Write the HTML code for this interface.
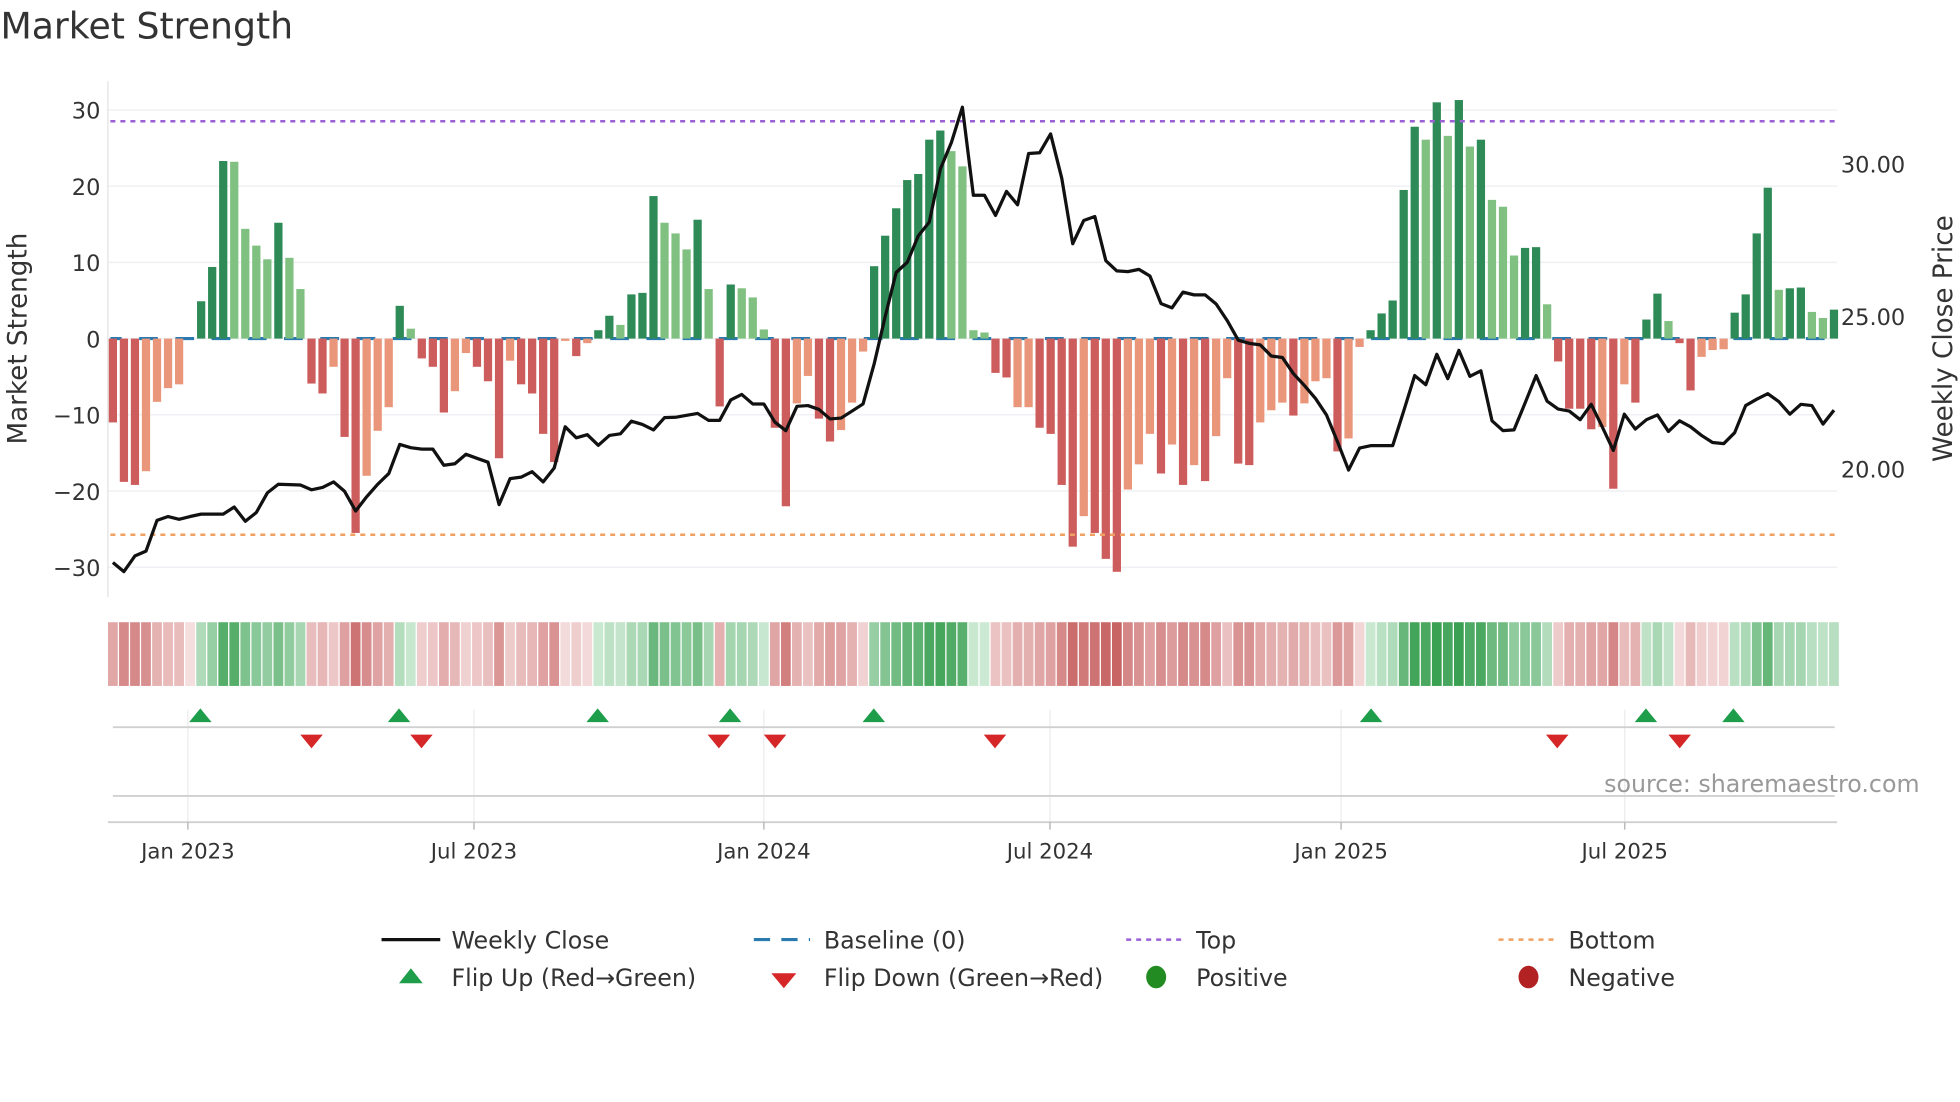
<!DOCTYPE html>
<html><head><meta charset="utf-8"><style>
html,body{margin:0;padding:0;background:#fff;}
svg{display:block;font-family:"DejaVu Sans","Liberation Sans",sans-serif;}
</style></head><body>
<svg id="c" width="1960" height="1102" viewBox="0 0 1568 882" xmlns="http://www.w3.org/2000/svg">
<rect width="1568" height="882" fill="#fff"/>
<text x="0" y="31" font-size="29" fill="#333">Market Strength</text>
<g id="grid"></g>
<line x1="86" y1="65" x2="86" y2="478" stroke="#e3e3e3" stroke-width="1"/>
<g font-size="18" fill="#333" text-anchor="end">
<text x="80" y="95">30</text><text x="80" y="156">20</text><text x="80" y="217">10</text><text x="80" y="278">0</text>
<text x="80" y="339">−10</text><text x="80" y="400">−20</text><text x="80" y="461">−30</text>
</g>
<g font-size="18" fill="#333">
<text x="1473" y="138">30.00</text><text x="1473" y="260">25.00</text><text x="1473" y="382">20.00</text>
</g>
<text transform="translate(21,271) rotate(-90)" font-size="21" fill="#333" text-anchor="middle">Market Strength</text>
<text transform="translate(1562,271) rotate(-90)" font-size="21" fill="#333" text-anchor="middle">Weekly Close Price</text>
<line x1="88" y1="271" x2="1470" y2="271" stroke="#2a7ab0" stroke-width="2.5" stroke-dasharray="15 14" stroke-dashoffset="6"/>
<g id="bars"></g>
<line x1="88" y1="97" x2="1470" y2="97" stroke="#9b5fd6" stroke-width="2" stroke-dasharray="4 4"/>
<line x1="88" y1="428" x2="1470" y2="428" stroke="#f0a060" stroke-width="2" stroke-dasharray="4 4"/>
<polyline id="price" fill="none" stroke="#111" stroke-width="2.6" stroke-linejoin="round"/>
<g id="heat"></g>
<g stroke="#ececec" stroke-width="1">
<line x1="150" y1="568" x2="150" y2="658"/><line x1="379" y1="568" x2="379" y2="658"/><line x1="611" y1="568" x2="611" y2="658"/>
<line x1="840" y1="568" x2="840" y2="658"/><line x1="1073" y1="568" x2="1073" y2="658"/><line x1="1300" y1="568" x2="1300" y2="658"/>
</g>
<line x1="90" y1="582" x2="1468" y2="582" stroke="#d0d0d0" stroke-width="1.5"/>
<line x1="90" y1="637" x2="1468" y2="637" stroke="#d0d0d0" stroke-width="1.5"/>
<line x1="86" y1="658" x2="1470" y2="658" stroke="#d0d0d0" stroke-width="1.5"/>
<g stroke="#bbb" stroke-width="1.2">
<line x1="150" y1="658" x2="150" y2="664"/><line x1="379" y1="658" x2="379" y2="664"/><line x1="611" y1="658" x2="611" y2="664"/>
<line x1="840" y1="658" x2="840" y2="664"/><line x1="1073" y1="658" x2="1073" y2="664"/><line x1="1300" y1="658" x2="1300" y2="664"/>
</g>
<g id="mk"></g>
<g font-size="17" fill="#333" text-anchor="middle">
<text x="150" y="687">Jan 2023</text><text x="379" y="687">Jul 2023</text><text x="611" y="687">Jan 2024</text>
<text x="840" y="687">Jul 2024</text><text x="1073" y="687">Jan 2025</text><text x="1300" y="687">Jul 2025</text>
</g>
<text x="1536" y="634" font-size="19" fill="#999" text-anchor="end">source: sharemaestro.com</text>
<g font-size="19" fill="#333">
<line x1="305" y1="752" x2="352" y2="752" stroke="#111" stroke-width="2.6"/><text x="361" y="759">Weekly Close</text>
<line x1="603" y1="752" x2="648" y2="752" stroke="#2a7ab0" stroke-width="2.5" stroke-dasharray="13 9"/><text x="659" y="759">Baseline (0)</text>
<line x1="901" y1="752" x2="945" y2="752" stroke="#9b5fd6" stroke-width="2" stroke-dasharray="4 4"/><text x="957" y="759">Top</text>
<line x1="1199" y1="752" x2="1243" y2="752" stroke="#f0a060" stroke-width="2" stroke-dasharray="4 4"/><text x="1255" y="759">Bottom</text>
<polygon points="319,787 338,787 328.5,775" fill="#1e9e4a"/><text x="361" y="789">Flip Up (Red→Green)</text>
<polygon points="617,779 637,779 627,791" fill="#d62728"/><text x="659" y="789">Flip Down (Green→Red)</text>
<ellipse cx="925" cy="782" rx="8" ry="9" fill="#228b22"/><text x="957" y="789">Positive</text>
<ellipse cx="1223" cy="782" rx="8" ry="9" fill="#b22222"/><text x="1255" y="789">Negative</text>
</g>
</svg>
<script>
var NS="http://www.w3.org/2000/svg";
function el(t,a,p){var e=document.createElementNS(NS,t);for(var k in a)e.setAttribute(k,a[k]);p.appendChild(e);return e;}
var g=document.getElementById('grid');
[30,20,10,0,-10,-20,-30].forEach(function(v){var y=271-v*6.1;el('line',{x1:86,y1:y,x2:1470,y2:y,stroke:'#eef0f3','stroke-width':1.2},g);});
var B=[[-11,1],[-18.8,1],[-19.2,1],[-17.4,0],[-8.3,0],[-6.5,0],[-6,0],[0,0],[4.9,1],[9.4,1],[23.3,1],[23.2,0],[14.4,0],[12.2,0],[10.4,0],[15.2,1],[10.6,0],[6.5,0],[-5.9,1],[-7.2,1],[-3.7,0],[-12.9,1],[-25.5,1],[-18,0],[-12.1,0],[-9,0],[4.3,1],[1.3,0],[-2.6,1],[-3.7,1],[-9.7,1],[-6.9,0],[-1.9,0],[-3.7,1],[-5.6,1],[-15.7,1],[-2.9,0],[-6,1],[-7.2,1],[-12.5,1],[-16.2,1],[-0.3,0],[-2.3,1],[-0.6,0],[1.1,1],[3,1],[1.8,0],[5.8,1],[6,1],[18.7,1],[15.2,0],[13.8,0],[11.7,0],[15.6,1],[6.5,0],[-8.9,1],[7.1,1],[6.6,0],[5.4,0],[1.2,0],[-11.7,1],[-22,1],[-8.5,0],[-4.9,0],[-10.5,1],[-13.5,1],[-12,0],[-8.4,0],[-1.7,0],[9.5,1],[13.5,1],[17.1,1],[20.8,1],[21.6,1],[26.1,1],[27.3,1],[24.6,0],[22.6,0],[1.1,0],[0.8,0],[-4.5,1],[-5.1,1],[-9,0],[-9,0],[-11.7,1],[-12.5,1],[-19.2,1],[-27.3,1],[-23.3,0],[-25.5,1],[-28.9,1],[-30.6,1],[-19.8,0],[-16.5,0],[-12.5,0],[-17.7,1],[-13.9,0],[-19.2,1],[-16.6,0],[-18.7,1],[-12.8,0],[-5.2,0],[-16.4,1],[-16.6,1],[-11,0],[-9.4,0],[-8.4,0],[-10.1,1],[-8.5,0],[-5.6,0],[-5.2,0],[-14.8,1],[-13.1,0],[-1.1,0],[1.1,1],[3.3,1],[5,1],[19.5,1],[27.8,1],[26.1,0],[31,1],[26.6,0],[31.3,1],[25.2,0],[26.1,1],[18.2,0],[17.3,0],[10.9,0],[11.9,1],[12,1],[4.5,0],[-3,1],[-9.2,1],[-9.2,1],[-11.9,1],[-11.6,0],[-19.7,1],[-6,0],[-8.4,1],[2.5,1],[5.9,1],[2.3,0],[-0.6,1],[-6.8,1],[-2.4,0],[-1.5,0],[-1.4,0],[3.4,1],[5.8,1],[13.8,1],[19.8,1],[6.4,0],[6.6,1],[6.7,1],[3.5,0],[2.7,0],[3.8,1]];
var bg=document.getElementById('bars'),hg=document.getElementById('heat');
function mix(a,b,t){return 'rgb('+[0,1,2].map(function(i){return Math.round(a[i]+(b[i]-a[i])*t);}).join(',')+')';}
B.forEach(function(b,i){
 var x=90+i*8.83,v=b[0],w=6.6,c;
 if(v>0)c=b[1]?'#2e8b57':'#80c080';else c=b[1]?'#cd5c5c':'#e9967a';
 if(v!==0){var y=v>0?271-v*6.1:271,h=Math.abs(v)*6.1;el('rect',{x:x-w/2,y:y,width:w,height:h,fill:c},bg);}
 var t=Math.min(1,Math.abs(v)/30),hc;
 if(v>0)hc=mix([212,237,218],[58,160,82],Math.pow(t,0.8));else hc=mix([245,222,222],[200,100,100],Math.pow(t,0.8));
 el('rect',{x:x-3.9,y:498,width:7.8,height:51,fill:hc},hg);
});
var P=[];
var z1=[1225,1248,1208,1196,1118,1108,1115,1108,1102,1102,1102,1084,1120,1098,1048,1026,1027,1028,1040,1034,1020,1044,1094,1058,1026,999,925,933,937,937,978,974,950,960,970,1078,1012,1008,994,1020,985,880,908,900,927,902,898,866,874,888,857,856,851,846,864,864,812,798,
822,822,868,890,828,826,836,860,858,840,822,720,600,488,462,395,360,225,158,68,292,292,343,282,316,186,184,136,248,415,356,346,458,484,486,480,497,567,578,538,545,545,568,610,660,668,672,700,704,745,775,808,850,918,990,934,928,928,
928,840,750,773,696,758,686,752,738,865,890,888,820,750,815,835,840,862,823,880,940,848,886,862,850,892,865,880,902,920,923,895,826,810,796,816,848,823,826,873,838];
z1.forEach(function(zy,i){P.push((90+i*8.83).toFixed(1)+','+(271+(zy-656)*0.315).toFixed(1));});
document.getElementById('price').setAttribute('points',P.join(' '));
var mk=document.getElementById('mk');
[160,319,478,584,699,1097,1317,1387].forEach(function(x){el('polygon',{points:(x-9)+',578 '+(x+9)+',578 '+x+',567',fill:'#1e9e4a'},mk);});
[249,337,575,620,796,1246,1344].forEach(function(x){el('polygon',{points:(x-9)+',588 '+(x+9)+',588 '+x+',599',fill:'#d62728'},mk);});
</script>
</body></html>
